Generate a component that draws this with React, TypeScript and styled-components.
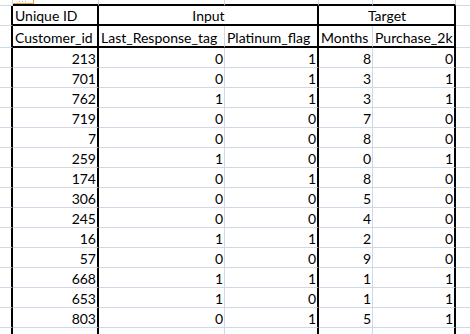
import styled, { createGlobalStyle } from "styled-components";

type Line = "thick" | "thin" | "none";

interface Row {
  id: number;
  lastResponse: number;
  platinum: number;
  months: number;
  purchase: number;
}

const rows: Row[] = [
  { id: 213, lastResponse: 0, platinum: 1, months: 8, purchase: 0 },
  { id: 701, lastResponse: 0, platinum: 1, months: 3, purchase: 1 },
  { id: 762, lastResponse: 1, platinum: 1, months: 3, purchase: 1 },
  { id: 719, lastResponse: 0, platinum: 0, months: 7, purchase: 0 },
  { id: 7, lastResponse: 0, platinum: 0, months: 8, purchase: 0 },
  { id: 259, lastResponse: 1, platinum: 0, months: 0, purchase: 1 },
  { id: 174, lastResponse: 0, platinum: 1, months: 8, purchase: 0 },
  { id: 306, lastResponse: 0, platinum: 0, months: 5, purchase: 0 },
  { id: 245, lastResponse: 0, platinum: 0, months: 4, purchase: 0 },
  { id: 16, lastResponse: 1, platinum: 1, months: 2, purchase: 0 },
  { id: 57, lastResponse: 0, platinum: 0, months: 9, purchase: 0 },
  { id: 668, lastResponse: 1, platinum: 1, months: 1, purchase: 1 },
  { id: 653, lastResponse: 1, platinum: 0, months: 1, purchase: 1 },
  { id: 803, lastResponse: 0, platinum: 1, months: 5, purchase: 1 },
];

const GlobalStyle = createGlobalStyle`
  body {
    margin: 0;
    background: #ffffff;
    overflow: hidden;
  }
`;

const lineStyle = (line: Line) =>
  line === "thick"
    ? "2px solid #000000"
    : line === "thin"
    ? "1px solid #d0d7e5"
    : "none";

const App = () => {
  // black frame columns: B, D, F end with a thick line
  const frameRight: Line[] = ["thick", "thick", "thin", "thick", "thin", "thick", "none"];

  return (
    <Sheet>
      <GlobalStyle />
      <PasteMarker />

      {/* row above the frame */}
      <Cell $height={6} $right="thin" $bottom="thin" />
      {[0, 1, 2, 3, 4].map((i) => (
        <Cell key={i} $height={6} $right="thin" $bottom="thick" />
      ))}
      <Cell $height={6} $right="none" $bottom="thin" />

      {/* group header */}
      <Cell $height={20} $right="thick" $bottom="thin" />
      <Cell $height={20} $right="thick" $bottom="thick">
        Unique ID
      </Cell>
      <Cell $height={20} $right="thick" $bottom="thick" $span={2} $align="center">
        Input
      </Cell>
      <Cell $height={20} $right="thick" $bottom="thick" $span={2} $align="center">
        Target
      </Cell>
      <Cell $height={20} $right="none" $bottom="thin" />

      {/* column header */}
      <Cell $height={22} $right="thick" $bottom="thin" />
      <Cell $height={22} $right="thick" $bottom="thick">
        Customer_id
      </Cell>
      <Cell $height={22} $right="thin" $bottom="thick">
        Last_Response_tag
      </Cell>
      <Cell $height={22} $right="thick" $bottom="thick">
        Platinum_flag
      </Cell>
      <Cell $height={22} $right="thin" $bottom="thick">
        Months
      </Cell>
      <Cell $height={22} $right="thick" $bottom="thick">
        Purchase_2k
      </Cell>
      <Cell $height={22} $right="none" $bottom="thin" />

      {rows.map((row) => {
        const values = ["", row.id, row.lastResponse, row.platinum, row.months, row.purchase, ""];
        return values.map((value, i) => (
          <Cell key={`${row.id}-${i}`} $height={20} $right={frameRight[i]} $bottom="thin" $align="right">
            {value}
          </Cell>
        ));
      })}

      {frameRight.map((line, i) => (
        <Cell key={`tail-${i}`} $height={20} $right={line} $bottom="thin" />
      ))}
    </Sheet>
  );
};

const Sheet = styled.div`
  position: relative;
  display: grid;
  grid-template-columns: 13px 86px 126px 94px 54px 83px 14px;
  width: 470px;
  height: 334px;
  overflow: hidden;
  font-family: Lato, "Liberation Sans", sans-serif;
  font-size: 14px;
  color: #000000;
`;

const Cell = styled.div<{
  $height: number;
  $right: Line;
  $bottom: Line;
  $span?: number;
  $align?: "left" | "center" | "right";
}>`
  box-sizing: border-box;
  display: flex;
  align-items: flex-end;
  justify-content: ${({ $align }) =>
    $align === "center" ? "center" : $align === "right" ? "flex-end" : "flex-start"};
  grid-column: ${({ $span }) => ($span ? `span ${$span}` : "auto")};
  height: ${({ $height }) => $height}px;
  padding: 0 1px 0 2px;
  border-right: ${({ $right }) => lineStyle($right)};
  border-bottom: ${({ $bottom }) => lineStyle($bottom)};
  line-height: 17px;
  white-space: nowrap;
  overflow: hidden;
`;

/* bottom edge of the floating paste-options button that sits above the sheet */
const PasteMarker = styled.div`
  position: absolute;
  top: 0;
  left: 13px;
  box-sizing: border-box;
  width: 21px;
  height: 4px;
  border-right: 1px solid #f0a040;
  border-bottom: 1px solid #f0a040;
  background:
    repeating-linear-gradient(90deg, #b0b0b0 0 1px, transparent 1px 3px) 6px 1px / 8px 1px
      no-repeat,
    #ffffff;
`;

export default App;
